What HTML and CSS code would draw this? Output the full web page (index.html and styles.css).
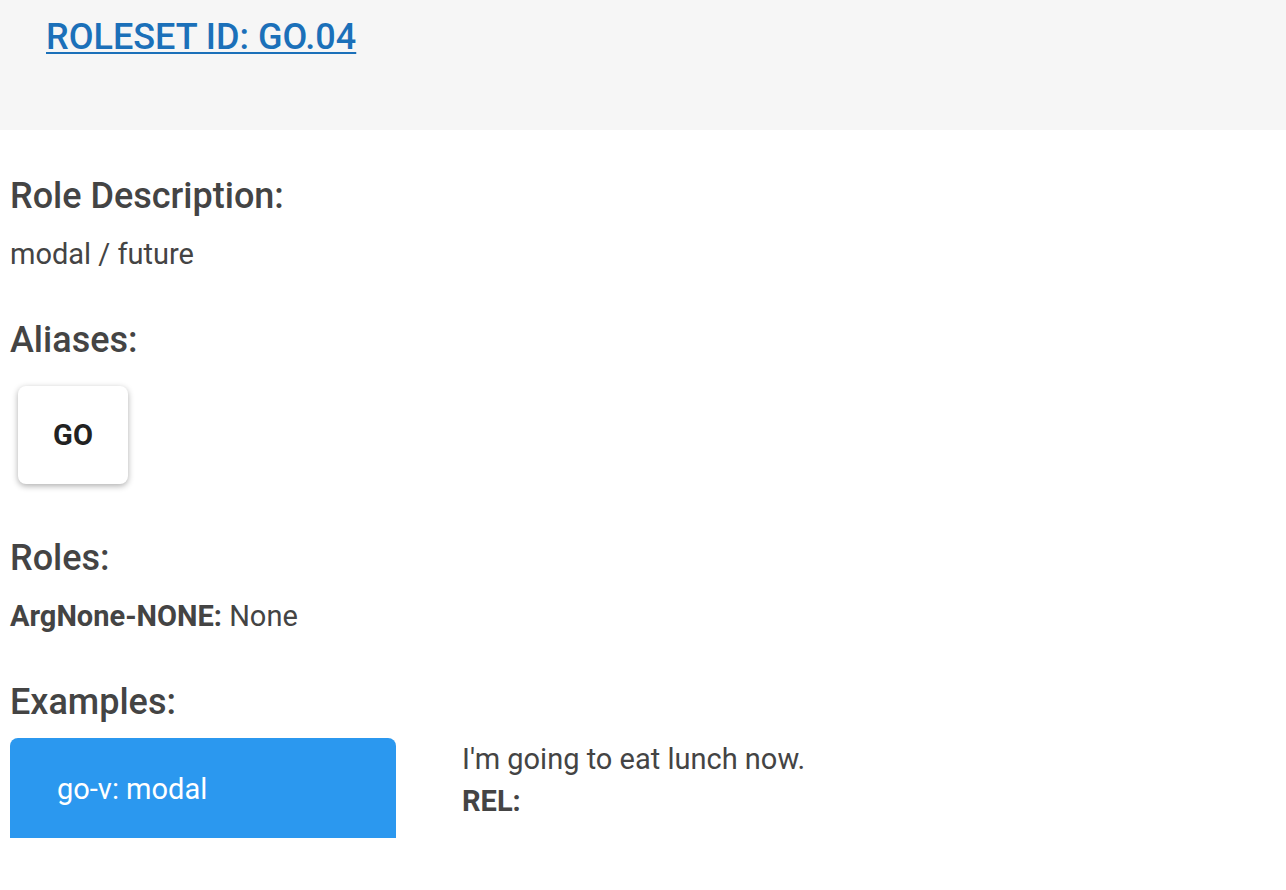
FILE: index.html
```html
<!DOCTYPE html>
<html>
<head>
<meta charset="utf-8">
<link rel="stylesheet" href="styles.css">
</head>
<body>
<header class="top">
  <a class="roleset" href="#">ROLESET ID: GO.04</a>
</header>
<main class="content">
  <section class="section">
    <h2 class="heading">Role Description:</h2>
    <p class="text">modal / future</p>
  </section>
  <section class="section">
    <h2 class="heading">Aliases:</h2>
    <div class="aliases">
      <div class="alias">GO</div>
    </div>
  </section>
  <section class="section">
    <h2 class="heading">Roles:</h2>
    <p class="text"><b>ArgNone-NONE:</b> None</p>
  </section>
  <section class="section">
    <h2 class="heading">Examples:</h2>
    <div class="example">
      <div class="example-tab">go-v: modal</div>
      <div class="example-body">
        <div class="sentence">I'm going to eat lunch now.</div>
        <div class="rel"><b>REL:</b></div>
      </div>
    </div>
  </section>
</main>
</body>
</html>
```
FILE: styles.css
```css
html, body {
  margin: 0;
  padding: 0;
  background: #ffffff;
  font-family: Roboto, "Liberation Sans", sans-serif;
  color: #444444;
}
.top {
  background: #f6f6f6;
  height: 130px;
  box-sizing: border-box;
  padding: 13px 46px 0;
}
.roleset {
  color: #1b70b9;
  font-size: 36px;
  font-weight: 500;
  line-height: 48px;
  text-decoration: underline;
  text-decoration-thickness: 2px;
  text-underline-offset: 3px;
}
.content {
  padding: 44px 10px 0;
}
.section {
  margin: 0;
}
.section + .section { margin-top: 44px; }
.heading {
  margin: 0;
  font-size: 36px;
  font-weight: 500;
  line-height: 44px;
}
.text {
  margin: 16px 0 0;
  font-size: 29px;
  line-height: 40px;
}
.text b { font-weight: 700; }
.aliases {
  display: flex;
  padding: 24px 8px 8px;
}
.alias {
  width: 110px;
  height: 98px;
  display: flex;
  align-items: center;
  justify-content: center;
  background: #fff;
  border-radius: 8px;
  box-shadow: 0 2px 6px rgba(0,0,0,0.32);
  font-size: 29px;
  font-weight: 700;
  color: #222;
}
.example {
  display: flex;
  gap: 66px;
  margin-top: 14px;
}
.example-tab {
  width: 386px;
  height: 100px;
  box-sizing: border-box;
  padding: 31px 47px 0;
  background: #2b98ef;
  color: #fff;
  border-radius: 8px 8px 0 0;
  font-size: 29px;
  line-height: 40px;
}
.example-body {
  font-size: 29px;
  line-height: 42px;
}
```
